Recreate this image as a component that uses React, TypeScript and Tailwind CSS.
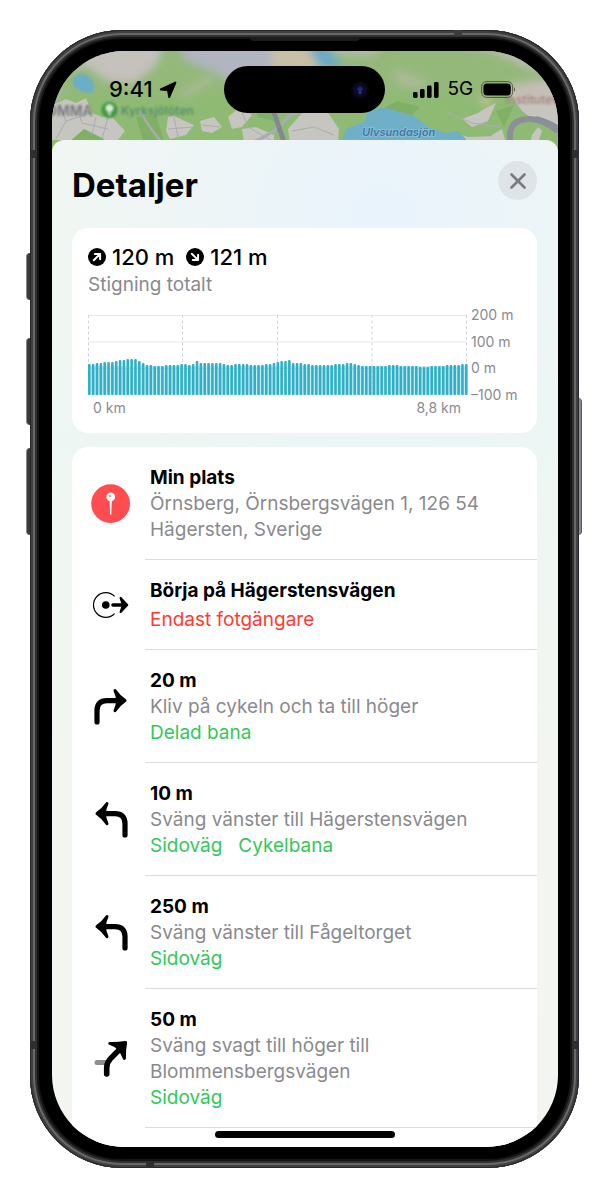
// Route details sheet shown over the map, inside a phone frame
import { X } from 'lucide-react';
import type { ReactNode } from 'react';

interface Step {
  id: string;
  icon: ReactNode;
  title: string;
  description?: string;
  tags?: string[];
  warning?: string;
}

// Metres above the bottom of the scale, in chart pixels
const ELEVATION = [
  31, 31, 32, 32, 33, 33, 33, 34, 35, 35, 36, 36, 36, 34, 32, 30, 30, 29, 29, 29,
  30, 30, 30, 30, 31, 31, 30, 31, 34, 32, 32, 32, 32, 32, 32, 31, 30, 30, 31, 31,
  31, 31, 30, 30, 30, 30, 31, 31, 32, 33, 34, 34, 35, 32, 32, 32, 31, 31, 30, 30,
  30, 30, 30, 30, 31, 31, 31, 32, 32, 31, 30, 29, 29, 29, 29, 29, 29, 29, 30, 30,
  30, 29, 29, 29, 29, 29, 28, 28, 28, 29, 29, 29, 29, 30, 30, 30, 30, 31, 31,
];

function PinIcon() {
  return (
    <svg viewBox="0 0 40 40" className="size-10">
      <circle cx="19.6" cy="19.6" r="19.4" fill="#ff4c51" />
      <path d="M18.6 16h2.2l-.5 14.2q-.6 1-1.2 0z" fill="#fff" />
      <circle cx="19.7" cy="12.9" r="4.4" fill="#fff" />
      <circle cx="19" cy="12" r="1.3" fill="#ff8d90" />
    </svg>
  );
}

function StartIcon() {
  return (
    <svg viewBox="0 0 40 40" className="size-10" fill="none" stroke="#000">
      <path d="M23.6 11.4A12.3 12.3 0 1 0 23.6 28.6" strokeWidth="1.2" />
      <circle cx="14.8" cy="20" r="3.8" fill="#000" stroke="none" />
      <path d="M22 20H34" strokeWidth="3.6" strokeLinecap="round" />
      <path
        d="M36.2 20L29.6 13L32 20L29.6 27Z"
        fill="#000"
        strokeWidth="2.2"
        strokeLinejoin="round"
      />
    </svg>
  );
}

function TurnIcon({ direction }: { direction: 'left' | 'right' }) {
  return (
    <svg
      viewBox="0 0 40 40"
      className={direction === 'left' ? 'size-10 -scale-x-100' : 'size-10'}
      fill="none"
      stroke="#000"
      strokeLinejoin="round"
    >
      <path d="M6 35V23.5Q6 13.6 16 13.6H28" strokeWidth="5.2" strokeLinecap="round" />
      <path
        d="M34 13.6Q28 9.4 24 3.6Q26.6 9 26.6 13.6Q26.600 18.200 24 23.600Q28 17.800 34 13.600Z"
        fill="#000"
        strokeWidth="3"
      />
    </svg>
  );
}

function SlightRightIcon() {
  return (
    <svg
      viewBox="0 0 40 40"
      className="size-10"
      fill="none"
      strokeLinecap="round"
      strokeLinejoin="round"
    >
      <path d="M6 23.4H15" stroke="#8e8e93" strokeWidth="5" />
      <path d="M15.7 35V29Q15.7 23.5 19.5 19.6L29 10" stroke="#000" strokeWidth="5.6" />
      <path
        d="M34.6 3.4Q27 4.600 18.800 4.400Q24.500 6.200 28 10Q31.400 14 33.400 19.400Q33.200 11 34.600 3.400Z"
        fill="#000"
        stroke="#000"
        strokeWidth="3"
      />
    </svg>
  );
}

const STEPS: Step[] = [
  {
    id: 'origin',
    icon: <PinIcon />,
    title: 'Min plats',
    description: 'Örnsberg, Örnsbergsvägen 1, 126 54 Hägersten, Sverige',
  },
  {
    id: 'start',
    icon: <StartIcon />,
    title: 'Börja på Hägerstensvägen',
    warning: 'Endast fotgängare',
  },
  {
    id: 'step-1',
    icon: <TurnIcon direction="right" />,
    title: '20 m',
    description: 'Kliv på cykeln och ta till höger',
    tags: ['Delad bana'],
  },
  {
    id: 'step-2',
    icon: <TurnIcon direction="left" />,
    title: '10 m',
    description: 'Sväng vänster till Hägerstensvägen',
    tags: ['Sidoväg', 'Cykelbana'],
  },
  {
    id: 'step-3',
    icon: <TurnIcon direction="left" />,
    title: '250 m',
    description: 'Sväng vänster till Fågeltorget',
    tags: ['Sidoväg'],
  },
  {
    id: 'step-4',
    icon: <SlightRightIcon />,
    title: '50 m',
    description: 'Sväng svagt till höger till Blommensbergsvägen',
    tags: ['Sidoväg'],
  },
];

function MapBackdrop() {
  return (
    <svg
      viewBox="0 0 506 110"
      preserveAspectRatio="xMidYMin slice"
      className="absolute inset-x-0 top-0 h-[110px] w-full"
    >
      <defs>
        <filter id="haze" x="-10%" y="-20%" width="120%" height="140%">
          <feGaussianBlur stdDeviation="4" />
        </filter>
        <filter id="soft">
          <feGaussianBlur stdDeviation="0.8" />
        </filter>
      </defs>
      <rect width="506" height="110" fill="#8fba74" />
      {/* built-up areas */}
      <g fill="#c6c5bf">
        <path d="M0 54L14 48L24 52L34 47L40 62L50 66L60 66L73 80L66 89L0 89Z" />
        <path d="M116 66L122 65L135 71L142 74L134 84L118 88L114 80Z" />
        <path d="M148 70L162 66L170 76L160 82L150 80Z" />
        <path d="M176 66L188 56L200 64L190 76L180 78Z" />
        <path d="M190 78L204 76L222 84L222 92L192 92Z" />
        <path d="M236 78L250 62L262 62L260 92L238 92Z" />
        <path d="M256 62L275 60L287 78L286 92L256 92Z" />
        <path d="M410 68L426 62L432 58L444 52L436 70L420 76Z" />
        <path d="M440 84L450 78L454 92L436 90Z" />
        <path d="M404 82L416 86L446 85L450 92L404 92Z" />
        <path d="M456 40L506 36L506 80L486 72L470 60Z" />
        <path d="M480 84L486 76L490 80L486 92L478 92Z" />
      </g>
      <g fill="#7fb065">
        <path d="M16 92L32 78L52 88L50 92Z" />
        <path d="M84 66L104 64L112 90L92 92Z" />
        <path d="M200 46L216 52L222 70L206 66Z" />
        <path d="M330 58L345 50L368 56L360 64Z" />
        <path d="M444 60L462 54L452 76Z" />
      </g>
      <path
        d="M289 92L294 78L313 70L316 58L334 57L362 65L378 77L394 82L406 80L414 88L414 100H289Z"
        fill="#6fb0c8"
      />
      <g fill="none" stroke="#a9adb2" strokeWidth="1">
        <path d="M8 54L14 70L4 88M14 70L40 62M24 54L30 72L56 78M44 66L40 84M56 66L50 88" />
        <path d="M122 66L126 86M116 78L140 76M150 74L168 76M190 62L196 76L220 90" />
        <path d="M240 80L262 76L282 84M392 60L420 72L448 76" />
        <path d="M88 60Q98 78 108 89" strokeWidth="2.4" />
        <path d="M198 92Q222 84 236 66L254 58" strokeWidth="3" />
      </g>
      <path d="M216 44L233 94" stroke="#818993" strokeWidth="5" fill="none" />
      <path
        d="M458 96V82Q460 68 478 68Q490 68 506 80M484 68Q498 72 506 78"
        stroke="#8b9098"
        strokeWidth="6"
        fill="none"
      />
      {/* status bar area is blurred */}
      <g filter="url(#haze)">
        <rect x="-10" y="-10" width="526" height="52" fill="#94b87a" />
        <path d="M-4 12L22 -10H112L104 14L82 32L56 30L34 14L-4 24Z" fill="#c5c1bd" />
        <path d="M128 -10H222L220 44L190 38L166 22L132 8Z" fill="#b0b5bf" />
        <path d="M-10 30L6 18L12 44L-10 60Z" fill="#a9b59b" />
        <path d="M218 -10H256L268 20H222Z" fill="#c9c0a5" />
        <path d="M252 -10H270L292 16H268Z" fill="#67aac9" />
        <path d="M272 -10H330L322 4L290 4Z" fill="#b4bcab" />
        <path d="M400 -10H516V26L480 18L440 0Z" fill="#bdbcb2" />
        <path d="M340 18L374 30L370 38L346 32Z" fill="#aebb9a" />
        <path d="M456 34L516 26V50L466 52Z" fill="#c6bdb6" />
        <path d="M426 46L440 44L434 58Z" fill="#c9bf9a" />
        <path d="M130 46L160 26" stroke="#b3bb9e" strokeWidth="5" />
      </g>
      <path d="M21 28Q26 20 36 25Q46 34 40 42Q28 42 21 34Z" fill="#6aaec7" filter="url(#soft)" />
      <g filter="url(#soft)">
        <circle cx="57.500" cy="59" r="8.200" fill="#46984a" />
        <circle cx="57.500" cy="57" r="3.600" fill="#d9ecd2" />
        <rect x="56.600" y="59" width="1.800" height="5" fill="#d9ecd2" />
      </g>
      <g fontFamily="Inter, sans-serif">
        <g filter="url(#soft)">
          <text x="-6" y="65" fontSize="14" fontWeight="600" fill="#77777c">
            OMMA
          </text>
          <text x="69" y="64" fontSize="12" fontWeight="600" fill="#568f68">
            Kyrksjölöten
          </text>
          <text x="453" y="53" fontSize="12" fontWeight="600" fill="#a58884">
            Institutet
          </text>
        </g>
        <text
          x="310"
          y="85"
          fontSize="11"
          fontWeight="600"
          fontStyle="italic"
          fill="#3d79a8"
          stroke="#8fc0d6"
          strokeWidth="1.500"
          paintOrder="stroke"
        >
          Ulvsundasjön
        </text>
      </g>
    </svg>
  );
}

function StatusBar() {
  return (
    <div className="relative flex h-[77px] items-center justify-center">
      <div className="flex flex-1 items-center justify-center gap-[6px] pl-[10px]">
        <span className="text-[22px] font-medium">9:41</span>
        <svg viewBox="0 0 18 18" className="size-[18px]">
          <path
            d="M16.400 1.600L10.200 16L9.200 10L8 8.900L1.800 8.500Z"
            stroke="#000"
            strokeWidth="2"
            strokeLinejoin="round"
          />
        </svg>
      </div>
      <div className="flex h-[47px] w-[161px] items-center justify-end rounded-full bg-black pr-4">
        <svg viewBox="0 0 18 18" className="size-[18px]">
          <circle cx="9" cy="9" r="9" fill="#07070f" />
          <circle cx="9" cy="9" r="6.500" fill="#0b0c2a" />
          <circle cx="9" cy="8" r="2.600" fill="#1a2a6c" />
          <circle cx="9" cy="11.500" r="1.500" fill="#2a3a88" />
        </svg>
      </div>
      <div className="flex flex-1 items-center justify-center gap-2 pr-3">
        <svg viewBox="0 0 26 16" className="h-4 w-[26px]">
          <rect x="0" y="10" width="4.600" height="6" rx="1.400" />
          <rect x="7" y="7" width="4.600" height="9" rx="1.400" />
          <rect x="14" y="3.500" width="4.600" height="12.500" rx="1.400" />
          <rect x="21" y="0" width="4.600" height="16" rx="1.400" />
        </svg>
        <span className="text-[19px]">5G</span>
        <svg viewBox="0 0 36 17" className="h-[17px] w-9">
          <rect
            x="0.600"
            y="0.600"
            width="31"
            height="15.800"
            rx="5"
            fill="none"
            stroke="#000"
            strokeOpacity="0.5"
          />
          <rect x="2.400" y="2.400" width="27.400" height="12.200" rx="3.600" />
          <path d="M33 6Q35 8.500 33 11Z" fillOpacity="0.5" />
        </svg>
      </div>
    </div>
  );
}

function ElevationChart() {
  const step = 377 / (ELEVATION.length - 1);

  return (
    <div className="mt-[6px] flex gap-[3px] text-sm text-[#8a8a8e]">
      <div className="min-w-0 flex-1 pt-[9px]">
        <svg viewBox="0 0 380 80" preserveAspectRatio="none" className="block h-20 w-full">
          <g stroke="#e5e5e8">
            <path d="M0 0.500H379M0 27H379M0 53.500H379" />
            <path
              d="M0.500 0V80M94.500 0V80M189.500 0V80M284 0V80M378.500 0V80"
              stroke="#d4d4d8"
              strokeDasharray="3 2.500"
            />
          </g>
          <rect x="0" y="51" width="379" height="29" fill="#30b0c7" opacity="0.25" />
          {ELEVATION.map((height, i) => (
            <rect
              key={i}
              x={i * step}
              y={80 - height}
              width="2.600"
              height={height}
              rx="1"
              fill="#30b0c7"
            />
          ))}
        </svg>
        <div className="flex justify-between pl-[5px] pr-[7px] leading-[26px]">
          <span>0 km</span>
          <span>8,8 km</span>
        </div>
      </div>
      <div className="flex h-[98px] w-[50px] flex-col justify-between whitespace-nowrap leading-[18px]">
        <span>200 m</span>
        <span>100 m</span>
        <span>0 m</span>
        <span>–100 m</span>
      </div>
    </div>
  );
}

function ClimbBadge({ down }: { down?: boolean }) {
  return (
    <svg viewBox="0 0 18 18" className={down ? 'size-[18px] rotate-90' : 'size-[18px]'}>
      <circle cx="9" cy="9" r="9" />
      <path
        d="M5.800 12.200L11.400 6.600M6.800 5.900H12.100V11.200"
        fill="none"
        stroke="#fff"
        strokeWidth="2"
        strokeLinecap="round"
        strokeLinejoin="round"
      />
    </svg>
  );
}

function ElevationCard() {
  return (
    <section className="rounded-2xl bg-white px-4 pb-3 pt-4">
      <div className="flex gap-3 text-[22px] font-medium leading-[26px]">
        <span className="flex items-center gap-[6px]">
          <ClimbBadge />
          120 m
        </span>
        <span className="flex items-center gap-[6px]">
          <ClimbBadge down />
          121 m
        </span>
      </div>
      <p className="text-[19px] leading-[30px] text-[#8a8a8e]">Stigning totalt</p>
      <ElevationChart />
    </section>
  );
}

function StepRow({ step }: { step: Step }) {
  return (
    <li className="flex pl-[19px]">
      <div className="flex w-[54px] shrink-0 items-center">{step.icon}</div>
      <div className="min-w-0 flex-1 border-b border-[#dcdcde] pb-4 pl-[5px] pr-8 pt-[18px] text-[19px] leading-[26px]">
        <h2 className="font-bold">{step.title}</h2>
        {step.description && <p className="text-[#8a8a8e]">{step.description}</p>}
        {step.warning && <p className="mt-[3px] text-[#ff3b30]">{step.warning}</p>}
        {step.tags && (
          <div className="flex gap-4 text-[#34c759]">
            {step.tags.map((tag) => (
              <span key={tag}>{tag}</span>
            ))}
          </div>
        )}
      </div>
    </li>
  );
}

function DetailsSheet() {
  return (
    <div className="relative mt-3 rounded-t-xl bg-[radial-gradient(circle_at_65%_8%,#e9f3fc_0%,#e9f3fc00_32%),linear-gradient(180deg,#f1f6f2_0%,#eef6f3_30%,#f3f6f0_60%,#f3f5f1_100%)] pl-5 pr-[21px] pt-[21px]">
      <header className="mb-7 flex h-[39px] items-center justify-between">
        <h1 className="pt-2 text-[33px] font-bold leading-[40px]">Detaljer</h1>
        <button
          type="button"
          aria-label="Stäng"
          className="flex size-[39px] items-center justify-center rounded-full bg-[#dfe4e8] text-[#7b7c80]"
        >
          <X size={26} strokeWidth={2.5} />
        </button>
      </header>
      <ElevationCard />
      <ul className="mt-[14px] rounded-t-2xl bg-white pb-[19px]">
        {STEPS.map((step) => (
          <StepRow key={step.id} step={step} />
        ))}
      </ul>
    </div>
  );
}

function SideButtons() {
  return (
    <>
      <div className="absolute -left-[4px] top-[223px] h-[47px] w-[5px] rounded-l-sm border-l border-[#8b8b89] bg-[#3a3a3a]" />
      <div className="absolute -left-[4px] top-[308px] h-[87px] w-[5px] rounded-l-sm border-l border-[#8b8b89] bg-[#3a3a3a]" />
      <div className="absolute -left-[4px] top-[418px] h-[87px] w-[5px] rounded-l-sm border-l border-[#8b8b89] bg-[#3a3a3a]" />
      <div className="absolute -right-[3px] top-[368px] h-[137px] w-[4px] rounded-r-sm border-r border-[#5a5a58] bg-[#8b8b89]" />
    </>
  );
}

function AntennaBands() {
  return (
    <>
      <div className="absolute left-0 top-[120px] h-2 w-[7px] bg-[#2c2e31]" />
      <div className="absolute right-0 top-[120px] h-2 w-[7px] bg-[#2c2e31]" />
      <div className="absolute bottom-[119px] left-0 h-2 w-[7px] bg-[#2c2e31]" />
      <div className="absolute bottom-[119px] right-0 h-2 w-[7px] bg-[#2c2e31]" />
      <div className="absolute right-[117px] top-0 h-[6px] w-2 bg-[#3a3c3f]" />
      <div className="absolute bottom-0 left-[116px] h-[6px] w-2 bg-[#2c2e31]" />
      <div className="absolute left-1/2 top-[7px] h-[4px] w-[110px] -translate-x-1/2 rounded-b-sm bg-[#1c1c1c]" />
    </>
  );
}

export default function App() {
  return (
    <main className="bg-white p-[30px] font-['Inter',sans-serif] text-black">
      <div className="relative">
        <SideButtons />
        <div className="relative rounded-[92px] bg-black pb-[21px] pl-[22px] pr-[21px] pt-[21px] shadow-[inset_0_0_0_1px_#26282b,inset_0_0_0_3px_#3e4044,inset_0_0_0_5px_#6a6865,inset_0_0_0_7px_#303030,inset_0_0_0_9px_#141414]">
          <AntennaBands />
          <div className="relative overflow-hidden rounded-[72px]">
            <MapBackdrop />
            <StatusBar />
            <DetailsSheet />
            <div className="absolute bottom-[9px] left-1/2 h-[7px] w-[180px] -translate-x-1/2 rounded-full bg-black" />
          </div>
        </div>
      </div>
    </main>
  );
}
